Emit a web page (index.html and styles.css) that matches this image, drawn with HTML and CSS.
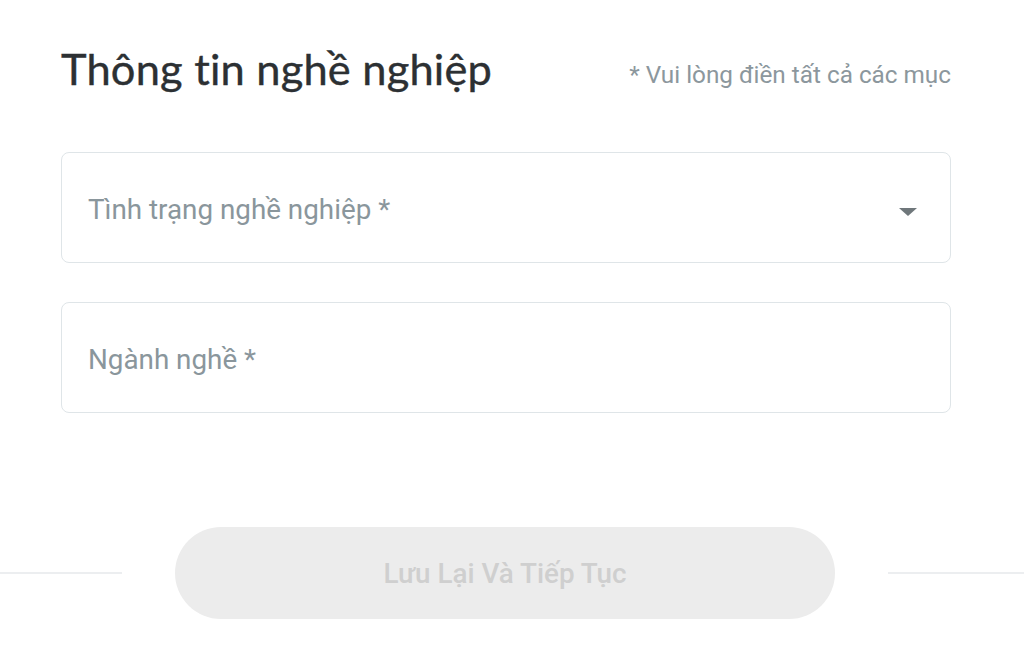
FILE: index.html
```html
<!DOCTYPE html>
<html lang="vi">
<head>
<meta charset="utf-8">
<link rel="stylesheet" href="styles.css">
</head>
<body>
<div class="page">
  <div class="header">
    <h1 class="title">Thông tin nghề nghiệp</h1>
    <span class="note">* Vui lòng điền tất cả các mục</span>
  </div>
  <div class="field select">
    <span class="label">Tình trạng nghề nghiệp *</span>
    <svg class="caret" width="18" height="10" viewBox="0 0 18 10"><path d="M0 1 L18 1 L9 9 Z" fill="#6f777b"/></svg>
  </div>
  <div class="field">
    <span class="label">Ngành nghề *</span>
  </div>
</div>
<div class="footer">
  <div class="line left"></div>
  <button class="btn" disabled>Lưu Lại Và Tiếp Tục</button>
  <div class="line right"></div>
</div>
</body>
</html>
```
FILE: styles.css
```css
html, body {
  margin: 0;
  padding: 0;
  background: #ffffff;
}
body {
  width: 1024px;
  height: 655px;
  overflow: hidden;
  font-family: Roboto, "Noto Sans", sans-serif;
}
.page {
  margin-left: 61px;
  width: 890px;
  padding-top: 40px;
}
.header {
  display: flex;
  justify-content: space-between;
  align-items: flex-start;
  height: 112px;
}
.title {
  margin: 0;
  font-family: Lato, "Noto Sans", sans-serif;
  font-weight: 400;
  font-size: 43.4px;
  line-height: 56px;
  color: #2c3033;
  letter-spacing: 0.2px;
  -webkit-text-stroke: 0.4px #2c3033;
}
.note {
  font-size: 24.3px;
  color: #8c979d;
  padding-top: 20px;
}
.field {
  box-sizing: border-box;
  height: 111px;
  border: 1.5px solid #dfe5e8;
  border-radius: 8px;
  display: flex;
  align-items: center;
  justify-content: space-between;
  padding: 3px 33px 0 26px;
  margin-bottom: 39px;
}
.label {
  font-size: 27.8px;
  color: #8a969c;
}
.caret {
  margin-top: 6px;
}
.footer {
  display: flex;
  align-items: center;
  margin-top: 114px;
}
.line {
  height: 2px;
  background: #eceef0;
}
.left {
  width: 122px;
}
.right {
  flex: 1;
}
.btn {
  width: 660px;
  height: 92px;
  margin: 0 53px;
  border: none;
  border-radius: 46px;
  background: #ececec;
  color: #cfcfcf;
  font-family: Roboto, sans-serif;
  font-weight: 500;
  font-size: 27.8px;
}
```
